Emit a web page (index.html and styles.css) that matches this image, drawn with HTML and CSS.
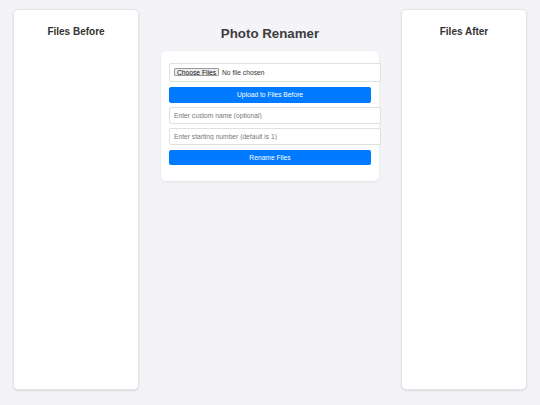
FILE: index.html
```html
<!DOCTYPE html>
<html lang="en">
<head>
<meta charset="utf-8">
<title>Photo Renamer</title>
<link rel="stylesheet" href="styles.css">
</head>
<body>
<div class="layout">
  <section class="panel">
    <h2 class="panel-title">Files Before</h2>
  </section>
  <main class="center">
    <h1 class="title">Photo Renamer</h1>
    <div class="card">
      <input class="field file-field" type="file" multiple>
      <button class="btn btn-upload" type="button">Upload to Files Before</button>
      <input class="field text-field" type="text" placeholder="Enter custom name (optional)">
      <input class="field text-field" type="text" placeholder="Enter starting number (default is 1)">
      <button class="btn btn-rename" type="button">Rename Files</button>
    </div>
  </main>
  <section class="panel">
    <h2 class="panel-title">Files After</h2>
  </section>
</div>
</body>
</html>
```
FILE: styles.css
```css
* { box-sizing: border-box; }
html, body { margin: 0; padding: 0; }
body {
  background: #f4f4f8;
  font-family: "Liberation Sans", Arial, Helvetica, sans-serif;
  color: #333;
  width: 540px;
  height: 405px;
  overflow: hidden;
}
.layout {
  display: flex;
  gap: 22px;
  padding: 9px 13px 0 13px;
  align-items: flex-start;
}
.panel {
  width: 126px;
  height: 381px;
  flex: none;
  background: #fff;
  border: 1px solid #e4e4e8;
  border-radius: 5px;
  box-shadow: 0 1px 2px rgba(0,0,0,0.10);
  padding-top: 16px;
}
.panel-title {
  margin: 0;
  font-size: 10px;
  font-weight: bold;
  text-align: center;
  color: #333;
}
.center {
  flex: 1;
  padding-top: 16.5px;
}
.title {
  margin: 0 0 10px 0;
  font-size: 13.3px;
  font-weight: bold;
  text-align: center;
  color: #3d3d3d;
}
.card {
  background: #fff;
  border-radius: 5px;
  box-shadow: 0 1px 3px rgba(0,0,0,0.08);
  padding: 12px 8px 16px 8px;
  display: flex;
  flex-direction: column;
  align-items: flex-start;
}
.field {
  box-sizing: content-box;
  width: 100%;
  margin: 0;
  padding: 0 4px;
  border: 1px solid #e0e0e0;
  border-radius: 2px;
  background: #fff;
  font-family: "Liberation Sans", Arial, Helvetica, sans-serif;
  font-size: 6.7px;
  color: #333;
  outline: none;
}
.file-field {
  height: 17.6px;
  line-height: 17.6px;
  display: flex;
  align-items: center;
}
.file-field::file-selector-button {
  font-family: "Liberation Sans", Arial, Helvetica, sans-serif;
  font-size: 6.7px;
  padding: 0 2px;
  height: 8px;
  margin-right: 3px;
  border: 1px solid #9a9a9a;
  border-radius: 1px;
  background: #ececef;
  color: #111;
}
.text-field {
  height: 14.5px;
  margin-top: 4.5px;
}
.text-field::placeholder { color: #777; }
.btn {
  width: 100%;
  border: none;
  border-radius: 2px;
  background: #007bff;
  color: #fff;
  font-family: "Liberation Sans", Arial, Helvetica, sans-serif;
  font-size: 6.7px;
  padding: 0;
  cursor: pointer;
}
.btn-upload { margin-top: 5px; height: 15.5px; }
.btn-rename { margin-top: 5px; height: 15.6px; }
```
